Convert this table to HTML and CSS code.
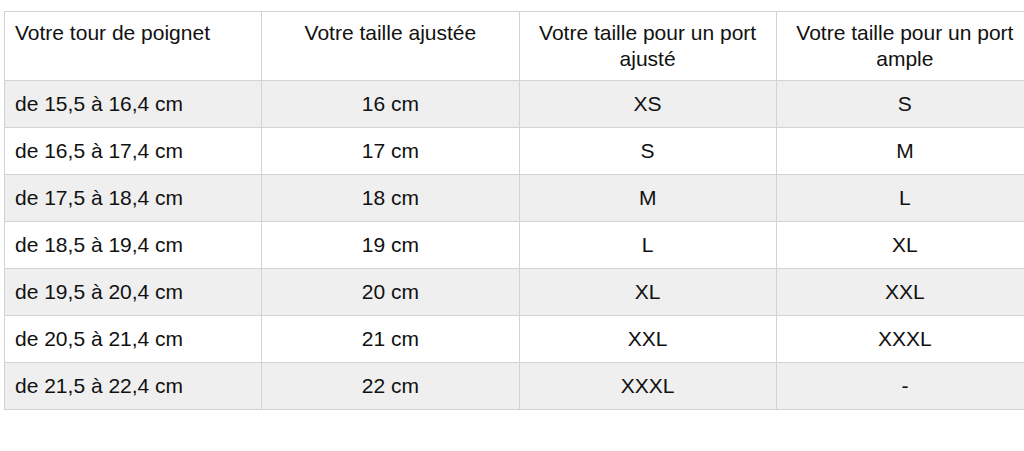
FILE: index.html
```html
<!DOCTYPE html>
<html lang="fr">
<head>
<meta charset="utf-8">
<link rel="stylesheet" href="styles.css">
</head>
<body>
<div class="page">
<table class="sizes">
<thead>
<tr>
<th class="first">Votre tour de poignet</th>
<th>Votre taille ajustée</th>
<th>Votre taille pour un port ajusté</th>
<th>Votre taille pour un port ample</th>
</tr>
</thead>
<tbody>
<tr class="alt"><td class="first">de 15,5 à 16,4 cm</td><td>16 cm</td><td>XS</td><td>S</td></tr>
<tr><td class="first">de 16,5 à 17,4 cm</td><td>17 cm</td><td>S</td><td>M</td></tr>
<tr class="alt"><td class="first">de 17,5 à 18,4 cm</td><td>18 cm</td><td>M</td><td>L</td></tr>
<tr><td class="first">de 18,5 à 19,4 cm</td><td>19 cm</td><td>L</td><td>XL</td></tr>
<tr class="alt"><td class="first">de 19,5 à 20,4 cm</td><td>20 cm</td><td>XL</td><td>XXL</td></tr>
<tr><td class="first">de 20,5 à 21,4 cm</td><td>21 cm</td><td>XXL</td><td>XXXL</td></tr>
<tr class="alt"><td class="first">de 21,5 à 22,4 cm</td><td>22 cm</td><td>XXXL</td><td>-</td></tr>
</tbody>
</table>
</div>
</body>
</html>
```
FILE: styles.css
```css
html, body {
  margin: 0;
  padding: 0;
  background: #ffffff;
  overflow: hidden;
}
.page {
  padding: 11px 0 0 4px;
  width: 1040px;
}
.sizes {
  border-collapse: collapse;
  table-layout: fixed;
  width: 1030px;
  font-family: "Liberation Sans", Arial, sans-serif;
  font-size: 21px;
  color: #111111;
}
.sizes th, .sizes td {
  border: 1px solid #d2d2d2;
  width: 257px;
  text-align: center;
  padding: 0 8px;
  box-sizing: border-box;
}
.sizes th {
  font-weight: normal;
  height: 69px;
  vertical-align: top;
  padding-top: 8px;
  line-height: 26px;
}
.sizes td {
  height: 47px;
  vertical-align: middle;
  line-height: 24px;
}
.sizes .first {
  text-align: left;
  padding-left: 10px;
}
.sizes tr.alt td {
  background: #efefef;
}
```
